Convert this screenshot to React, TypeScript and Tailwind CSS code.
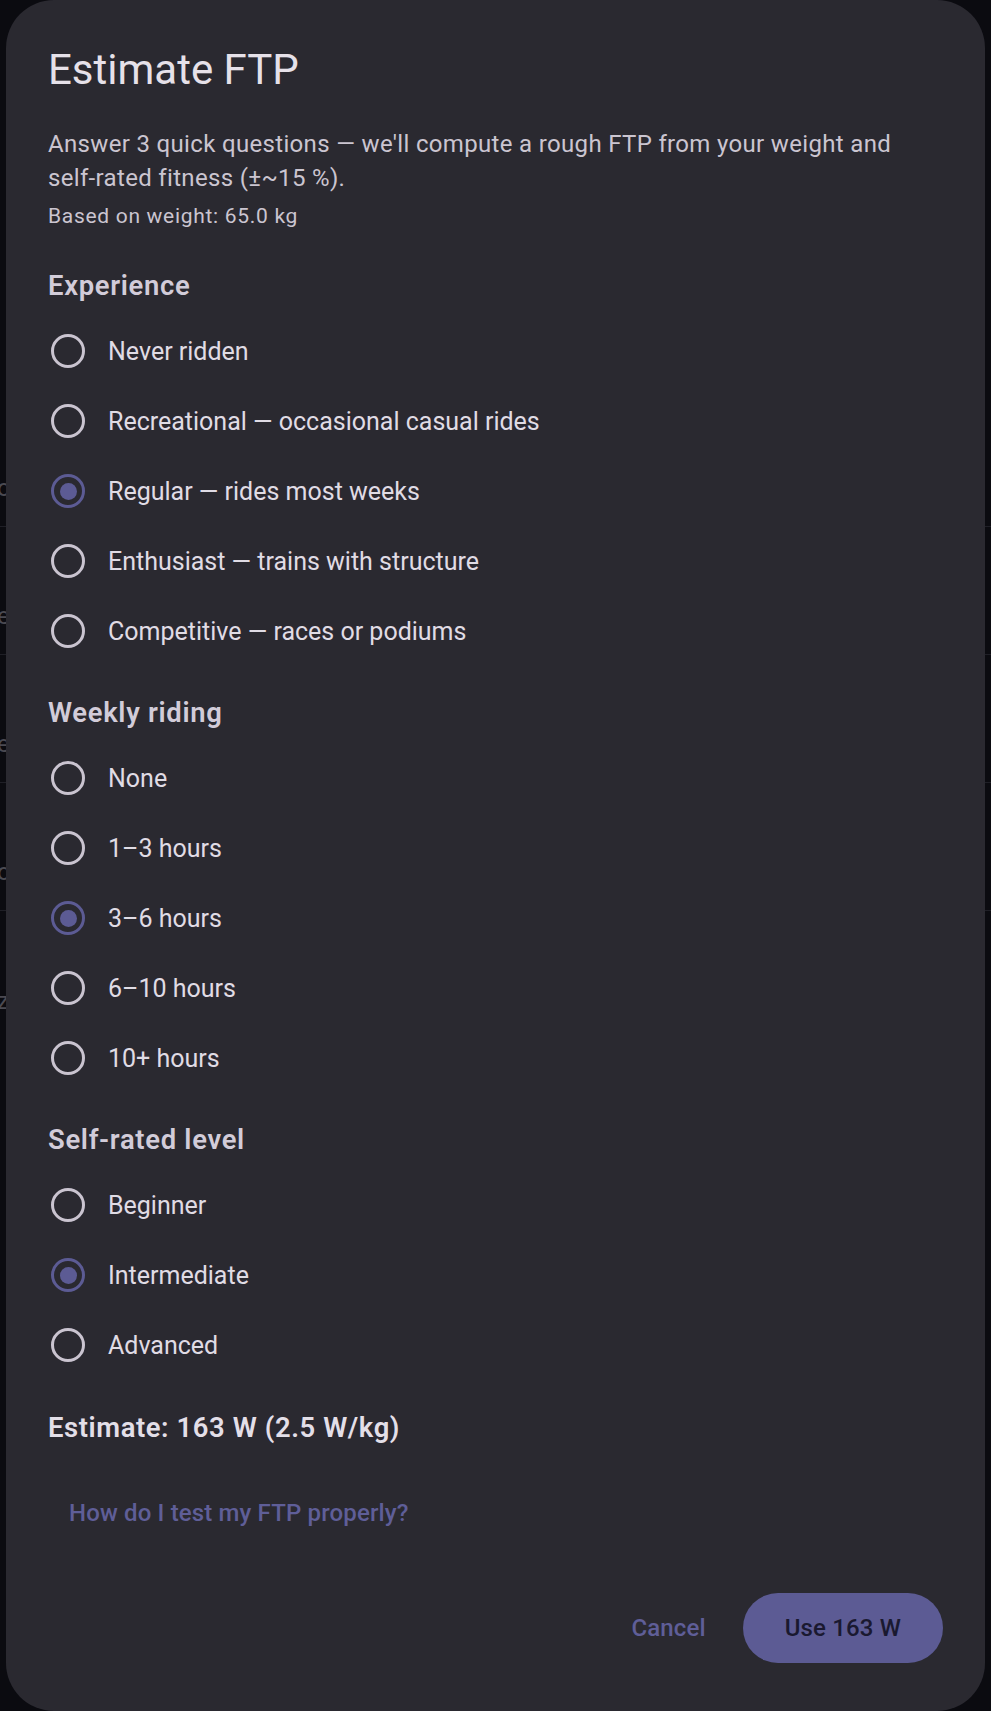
import { useState } from 'react';

type Option = { id: string; label: string };

const experience: Option[] = [
  { id: 'never', label: 'Never ridden' },
  { id: 'rec', label: 'Recreational — occasional casual rides' },
  { id: 'regular', label: 'Regular — rides most weeks' },
  { id: 'enthusiast', label: 'Enthusiast — trains with structure' },
  { id: 'competitive', label: 'Competitive — races or podiums' },
];

const weekly: Option[] = [
  { id: 'none', label: 'None' },
  { id: '1-3', label: '1–3 hours' },
  { id: '3-6', label: '3–6 hours' },
  { id: '6-10', label: '6–10 hours' },
  { id: '10+', label: '10+ hours' },
];

const levels: Option[] = [
  { id: 'beginner', label: 'Beginner' },
  { id: 'intermediate', label: 'Intermediate' },
  { id: 'advanced', label: 'Advanced' },
];

// rows of the settings list behind the scrim
const backdropRows = ['on', 'enabled', 'easy', 'off', 'zones'];

const Radio = ({ checked }: { checked: boolean }) => (
  <span
    className={`ml-[3px] flex h-[34px] w-[34px] shrink-0 items-center justify-center rounded-full border-[3.5px] ${
      checked ? 'border-[#5c5b94]' : 'border-[#cac4d0]'
    }`}
  >
    {checked && <span className="h-[17px] w-[17px] rounded-full bg-[#5c5b94]" />}
  </span>
);

const RadioGroup = ({
  title,
  options,
  value,
  onChange,
}: {
  title: string;
  options: Option[];
  value: string;
  onChange: (id: string) => void;
}) => (
  <div className="mt-[27px] first:mt-[36px]">
    <h3 className="text-[27.4px] leading-[41px] font-semibold tracking-[0.7px] text-[#d2ccd9]">{title}</h3>
    <div className="mt-[9px] flex flex-col">
      {options.map((o) => (
        <button
          key={o.id}
          onClick={() => onChange(o.id)}
          className="flex h-[70px] cursor-pointer items-center bg-transparent text-left"
        >
          <Radio checked={value === o.id} />
          <span className="ml-[23px] text-[25px] leading-[41px] tracking-normal text-[#e0dce5]">{o.label}</span>
        </button>
      ))}
    </div>
  </div>
);

export default function App() {
  const [exp, setExp] = useState('regular');
  const [hours, setHours] = useState('3-6');
  const [level, setLevel] = useState('intermediate');

  return (
    <div className="relative h-[1711px] w-full overflow-hidden bg-[#0b0b10] font-['Roboto','Noto_Sans',sans-serif]">
      {/* list under the scrim */}
      <div className="flex flex-col pt-[399px]">
        {backdropRows.map((r, i) => (
          <div
            key={i}
            className="flex h-[128px] items-end border-b border-[#1f1f26] pb-[20px] text-[24px] text-[#4b4a52] last:border-b-0"
          >
            <span className="-ml-[3px]">{r}</span>
          </div>
        ))}
      </div>

      <div className="absolute top-0 left-[6px] flex h-[1711px] w-[979px] flex-col rounded-[48px] bg-[#2a2930] px-[42px] pt-[42px]">
        <h2 className="text-[42px] leading-[55px] text-[#e6e1e9]">Estimate FTP</h2>
        <p className="mt-[30px] text-[24px] leading-[34px] tracking-[0.33px] text-[#cbc5d0]">
          Answer 3 quick questions — we'll compute a rough FTP from your weight and self-rated fitness (±~15 %).
        </p>
        <p className="mt-[8px] text-[21px] leading-[27.4px] tracking-[0.7px] text-[#cbc5d0]">
          Based on weight: 65.0 kg
        </p>

        <div className="flex flex-col">
          <RadioGroup title="Experience" options={experience} value={exp} onChange={setExp} />
          <RadioGroup title="Weekly riding" options={weekly} value={hours} onChange={setHours} />
          <RadioGroup title="Self-rated level" options={levels} value={level} onChange={setLevel} />
        </div>

        <p className="mt-[27.5px] text-[27.4px] leading-[41px] font-semibold tracking-[0.6px] text-[#e3dfe8]">
          Estimate: 163 W (2.5 W/kg)
        </p>

        <div className="mt-[29.5px] flex">
          <button className="flex h-[69px] items-center rounded-full bg-transparent px-[21px] text-[24px] font-medium tracking-[0.15px] text-[#5f5e98]">
            How do I test my FTP properly?
          </button>
        </div>

        <div className="mt-[46px] flex items-center justify-end gap-[16px]">
          <button className="flex h-[70px] items-center rounded-full bg-transparent px-[21px] text-[24px] font-medium tracking-[0.15px] text-[#5f5e98]">
            Cancel
          </button>
          <button className="flex h-[70px] items-center rounded-full bg-[#5c5b94] px-[42px] text-[24px] font-medium tracking-[0.15px] text-[#1a1930]">
            Use 163 W
          </button>
        </div>
      </div>
    </div>
  );
}
